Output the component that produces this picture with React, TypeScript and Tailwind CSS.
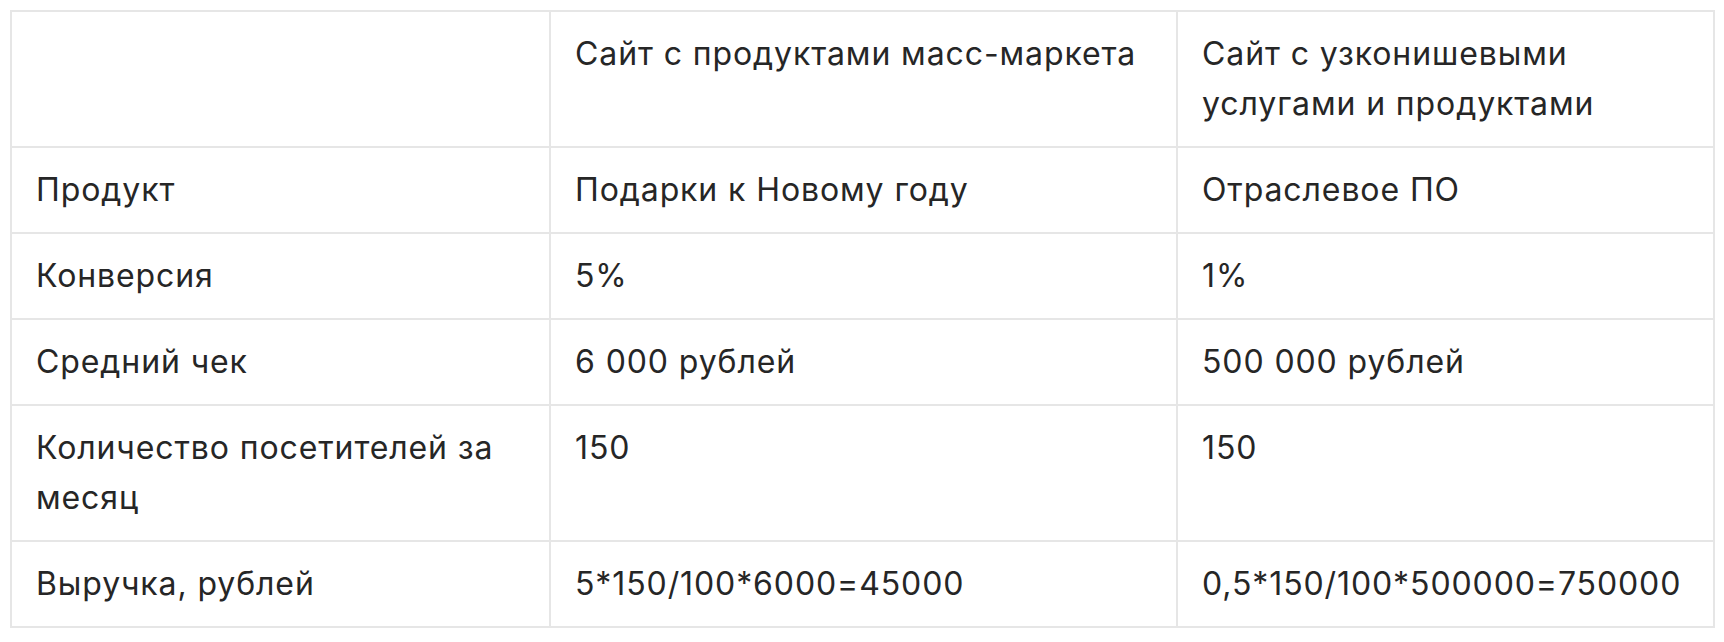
const rows: [string, string, string][] = [
  ['Продукт', 'Подарки к Новому году', 'Отраслевое ПО'],
  ['Конверсия', '5%', '1%'],
  ['Средний чек', '6 000 рублей', '500 000 рублей'],
  ['Количество посетителей за месяц', '150', '150'],
  ['Выручка, рублей', '5*150/100*6000=45000', '0,5*150/100*500000=750000'],
];

export default function App() {
  return (
    <div className="min-h-screen bg-white pt-[10px] pl-[10px] font-['Inter',sans-serif] text-[32px] leading-[50px] tracking-[0.9px] text-[#262626]">
      <table className="border-collapse table-fixed w-[1703px]">
        <colgroup>
          <col className="w-[539px]" />
          <col className="w-[627px]" />
          <col className="w-[537px]" />
        </colgroup>
        <thead>
          <tr>
            <th className="border-2 border-[#e6e6e6] px-[24px] py-[17px] align-top text-left font-normal"></th>
            <th className="border-2 border-[#e6e6e6] px-[24px] py-[17px] align-top text-left font-normal">
              Сайт с продуктами масс-маркета
            </th>
            <th className="border-2 border-[#e6e6e6] px-[24px] py-[17px] align-top text-left font-normal">
              Сайт с узконишевыми услугами и продуктами
            </th>
          </tr>
        </thead>
        <tbody>
          {rows.map((r) => (
            <tr key={r[0]}>
              {r.map((c, i) => (
                <td key={i} className="border-2 border-[#e6e6e6] px-[24px] py-[17px] align-top">
                  {c}
                </td>
              ))}
            </tr>
          ))}
        </tbody>
      </table>
    </div>
  );
}
